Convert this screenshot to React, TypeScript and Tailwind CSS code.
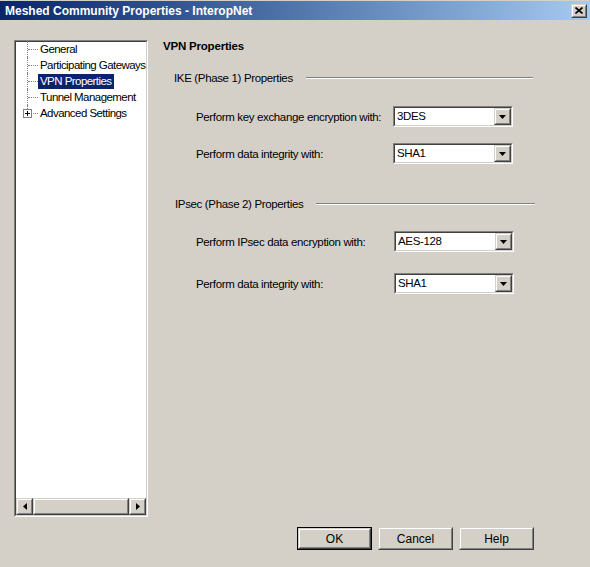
import React from "react";

const font = { fontFamily: '"Liberation Sans", Arial, sans-serif' };

function Sunken({ children, className = "" }: { children: React.ReactNode; className?: string }) {
  return (
    <div className={"border border-t-[#808080] border-l-[#808080] border-b-white border-r-white " + className}>
      <div className="border border-t-[#404040] border-l-[#404040] border-b-[#d4d0c8] border-r-[#d4d0c8] h-full w-full">
        {children}
      </div>
    </div>
  );
}

function RaisedBtn({ children, className = "" }: { children: React.ReactNode; className?: string }) {
  return (
    <div className={"border border-t-[#d4d0c8] border-l-[#d4d0c8] border-b-[#404040] border-r-[#404040] " + className}>
      <div className="border border-t-white border-l-white border-b-[#808080] border-r-[#808080] h-full w-full bg-[#d4d0c8] flex items-center justify-center">
        {children}
      </div>
    </div>
  );
}

function Select({ value }: { value: string }) {
  return (
    <Sunken className="w-[120px] h-[21px]">
      <div className="flex h-full items-stretch bg-white">
        <div className="flex-1 pl-[2px] flex items-center text-[11.5px] tracking-[-0.35px] text-black leading-none">{value}</div>
        <RaisedBtn className="w-[17px] h-[17px]">
          <svg width="7" height="4" viewBox="0 0 7 4"><path d="M0 0h7L3.5 4z" fill="#000" /></svg>
        </RaisedBtn>
      </div>
    </Sunken>
  );
}

function Row({ label, value, labelW }: { label: string; value: string; labelW: number }) {
  return (
    <div className="flex items-center">
      <div className="text-[11.5px] tracking-[-0.35px] leading-[14px] text-black whitespace-nowrap" style={{ width: labelW }}>{label}</div>
      <Select value={value} />
    </div>
  );
}

function Group({ title, w }: { title: string; w: number }) {
  return (
    <div className="flex items-center" style={{ width: w }}>
      <span className="text-[11.5px] tracking-[-0.35px] leading-[14px] text-black whitespace-nowrap">{title}</span>
      <div className="ml-[13px] flex-1 h-[2px] border-t border-t-[#808080] border-b border-b-white" />
    </div>
  );
}

function TreeItem({ label, selected, plus, last }: { label: string; selected?: boolean; plus?: boolean; last?: boolean }) {
  return (
    <div className="relative flex items-center h-[16px]">
      <div className="absolute left-[9px] top-0 w-0 border-l border-dotted border-[#808080]" style={{ height: last ? 8 : 16 }} />
      <div className="absolute left-[10px] top-[8px] w-[10px] border-t border-dotted border-[#808080]" />
      {plus && (
        <div className="absolute left-[5px] top-[4px] w-[9px] h-[9px] border border-[#808080] bg-white flex items-center justify-center">
          <svg width="5" height="5" viewBox="0 0 5 5"><path d="M0 2.5h5M2.5 0v5" stroke="#000" strokeWidth="1" /></svg>
        </div>
      )}
      <span
        className={
          "ml-[20px] px-[2px] text-[11.5px] tracking-[-0.55px] leading-[15px] whitespace-nowrap " +
          (selected ? "bg-[#0a246a] text-white" : "text-black")
        }
      >
        {label}
      </span>
    </div>
  );
}

export default function App() {
  return (
    <div className="w-[590px] h-[567px] bg-[#d4d0c8] flex flex-col overflow-hidden" style={font}>
      <div className="h-[19px] bg-gradient-to-r from-[#0a246a] to-[#a6caf0] flex items-center justify-between pl-[5px] pr-[3px] mt-[1px]">
        <span className="text-white font-bold text-[12px] leading-none">Meshed Community Properties - InteropNet</span>
        <RaisedBtn className="w-[16px] h-[14px]">
          <svg width="8" height="7" viewBox="0 0 8 7"><path d="M0.5 0.5L7.5 6.5M7.5 0.5L0.5 6.5" stroke="#000" strokeWidth="1.6" /></svg>
        </RaisedBtn>
      </div>
      <div className="flex flex-1">
        <div className="ml-[14px] mt-[20px]">
          <Sunken className="w-[134px] h-[477px]">
            <div className="flex flex-col h-full bg-white">
              <div className="flex-1 mt-[-1px] pl-[2px] overflow-hidden">
                <TreeItem label="General" />
                <TreeItem label="Participating Gateways" />
                <TreeItem label="VPN Properties" selected />
                <TreeItem label="Tunnel Management" />
                <TreeItem label="Advanced Settings" plus last />
              </div>
              <div className="h-[17px] flex bg-[#e4e1dc]">
                <RaisedBtn className="w-[17px] h-[17px]">
                  <svg width="4" height="7" viewBox="0 0 4 7"><path d="M4 0v7L0 3.5z" fill="#000" /></svg>
                </RaisedBtn>
                <RaisedBtn className="flex-1 h-[17px]">
                  <span />
                </RaisedBtn>
                <RaisedBtn className="w-[17px] h-[17px]">
                  <svg width="4" height="7" viewBox="0 0 4 7"><path d="M0 0v7L4 3.5z" fill="#000" /></svg>
                </RaisedBtn>
              </div>
            </div>
          </Sunken>
        </div>
        <div className="flex-1 flex flex-col pl-[15px] pt-[19px] relative">
          <div className="text-[11.5px] leading-[14px] font-bold text-black tracking-[-0.2px]">VPN Properties</div>
          <div className="mt-[18px] ml-[11px]">
            <Group title="IKE (Phase 1) Properties" w={359} />
          </div>
          <div className="mt-[21px] ml-[33px] flex flex-col gap-[16px]">
            <Row label="Perform key exchange encryption with:" value="3DES" labelW={197} />
            <Row label="Perform data integrity with:" value="SHA1" labelW={197} />
          </div>
          <div className="mt-[33px] ml-[12px]">
            <Group title="IPsec (Phase 2) Properties" w={360} />
          </div>
          <div className="mt-[20px] ml-[33px] flex flex-col gap-[21px]">
            <Row label="Perform IPsec data encryption with:" value="AES-128" labelW={198} />
            <Row label="Perform data integrity with:" value="SHA1" labelW={198} />
          </div>
          <div className="absolute left-[149px] top-[507px] flex gap-[6px]">
            <div className="w-[75px] h-[23px] border border-black">
              <RaisedBtn className="w-full h-full"><span className="text-[12px] text-black">OK</span></RaisedBtn>
            </div>
            <RaisedBtn className="w-[75px] h-[23px]"><span className="text-[12px] text-black">Cancel</span></RaisedBtn>
            <RaisedBtn className="w-[75px] h-[23px]"><span className="text-[12px] text-black">Help</span></RaisedBtn>
          </div>
        </div>
      </div>
    </div>
  );
}
